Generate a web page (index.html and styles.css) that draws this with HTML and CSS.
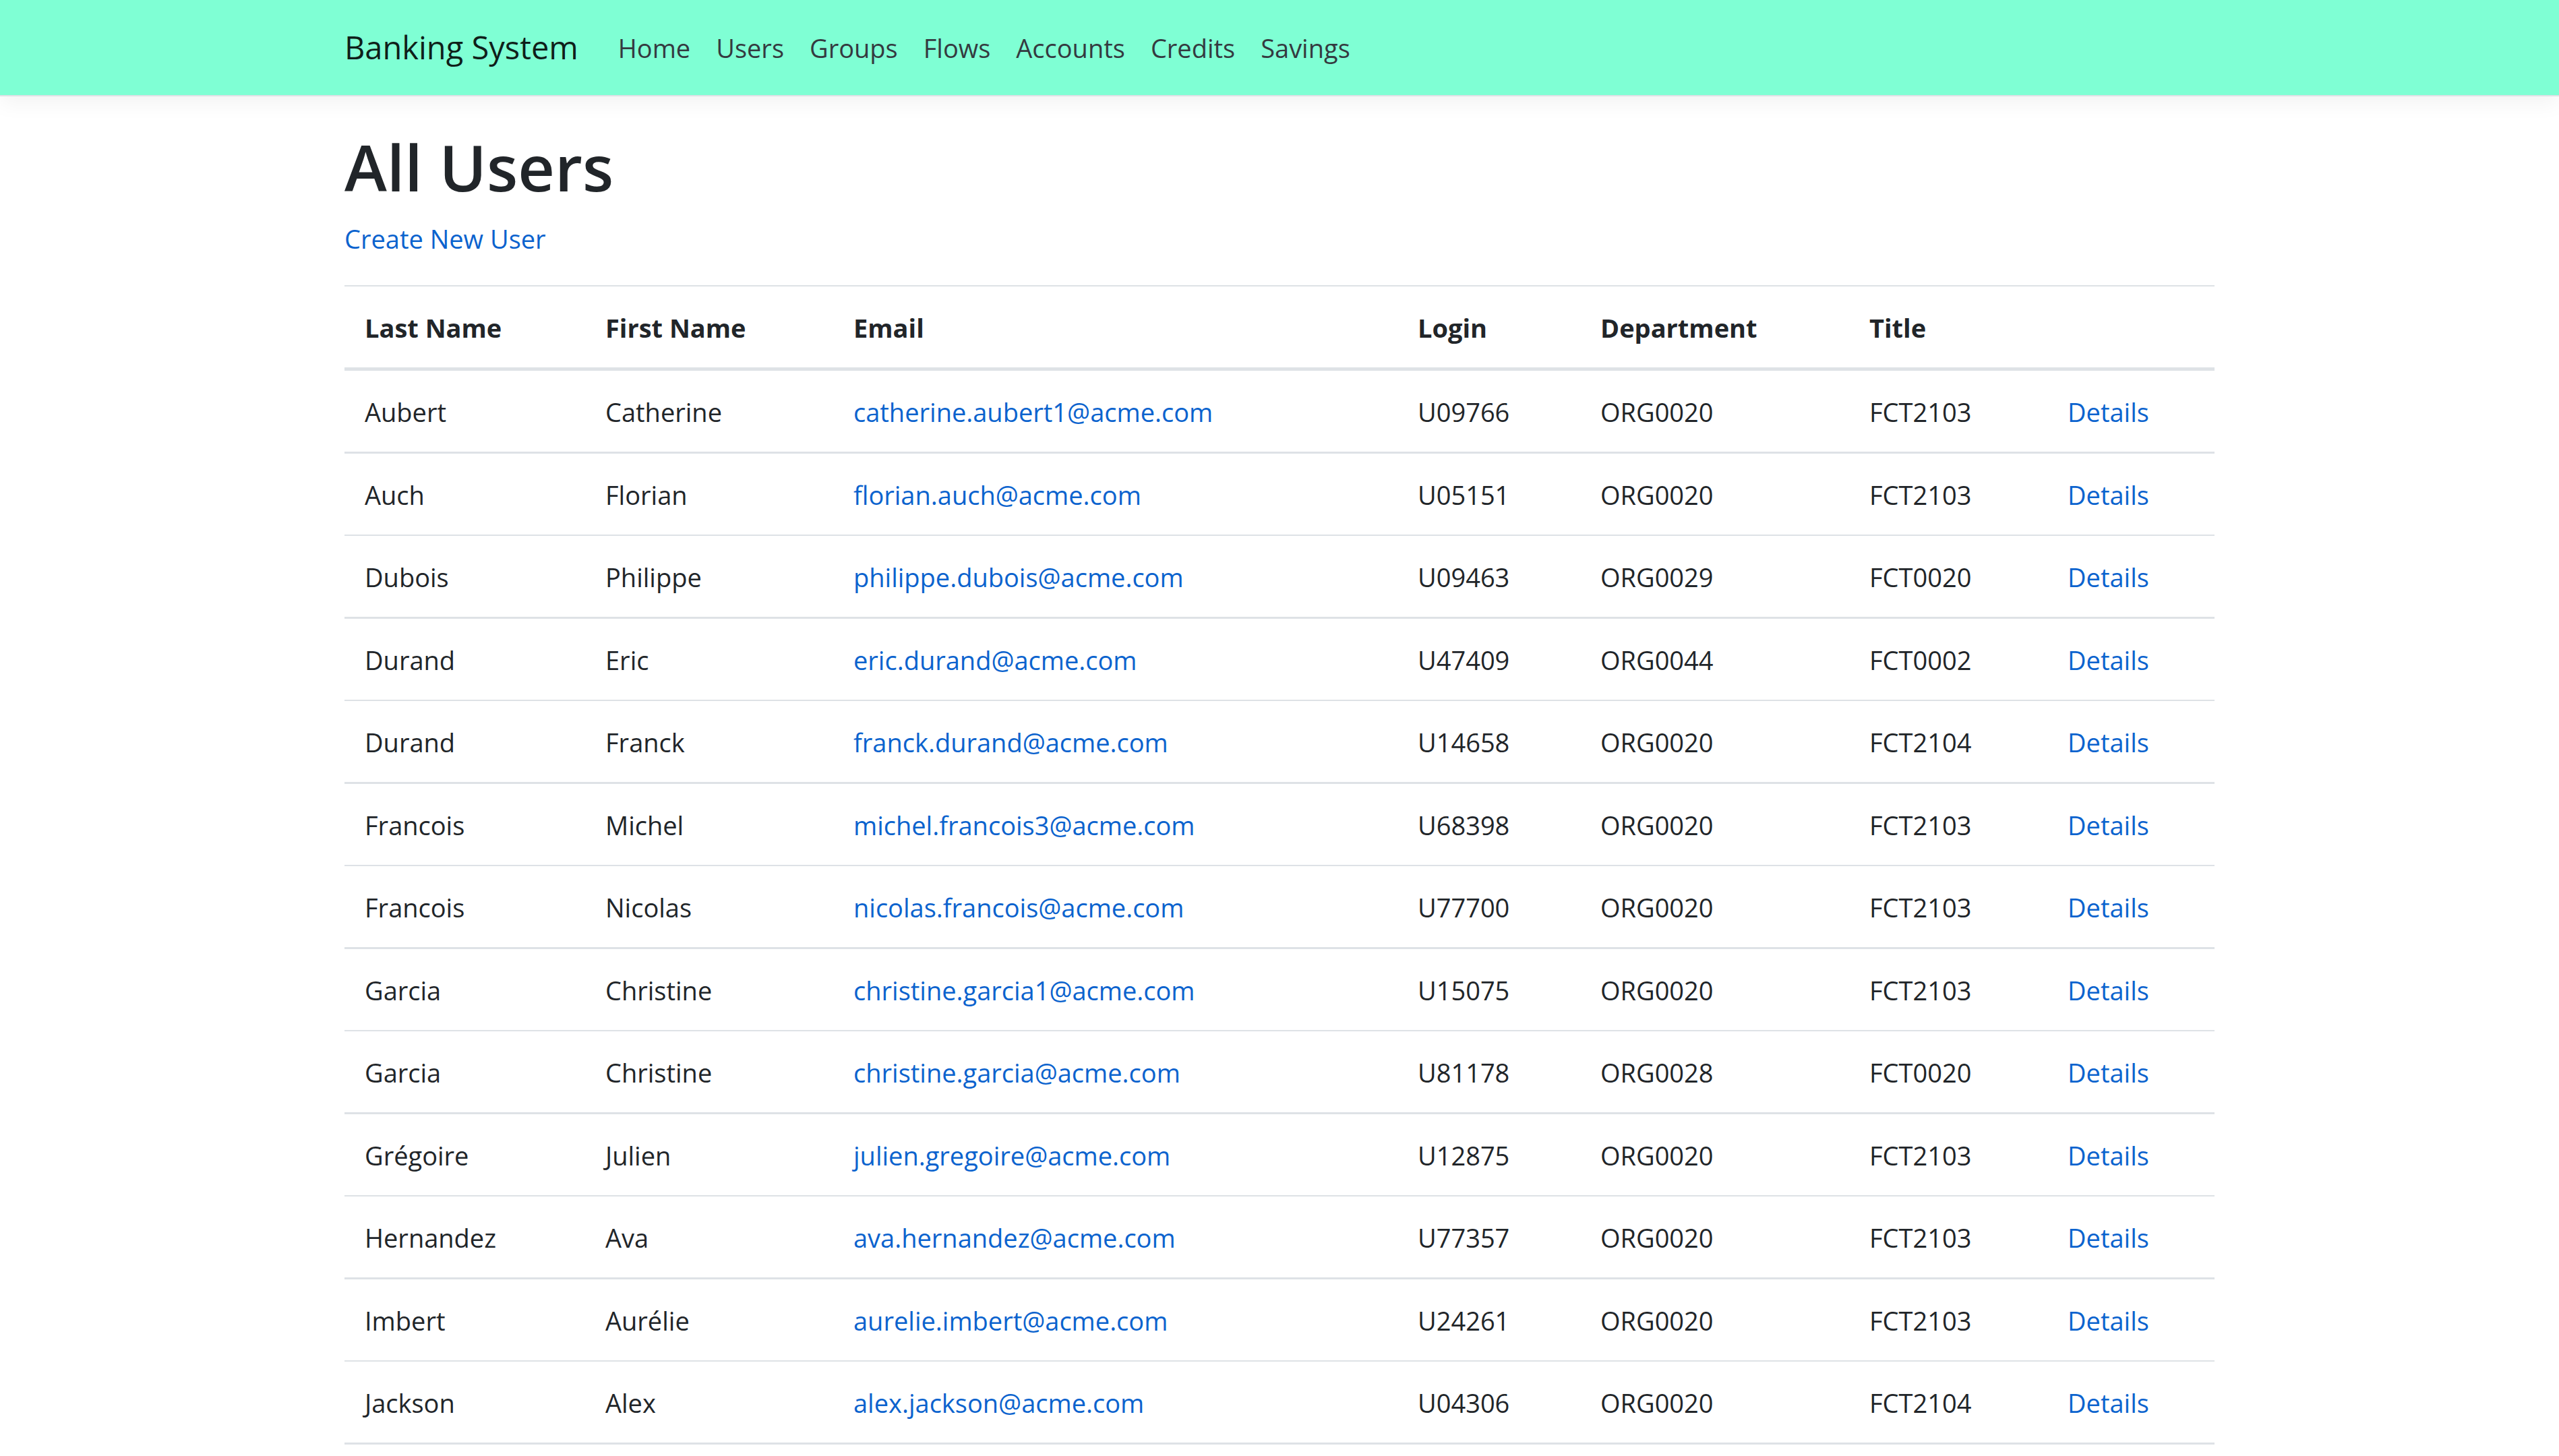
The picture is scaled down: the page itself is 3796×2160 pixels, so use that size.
FILE: index.html
```html
<!DOCTYPE html>
<html lang="en">
<head>
    <meta charset="UTF-8">
    <meta name="viewport" content="width=device-width, initial-scale=1.0">
    <title>All Users - Banking System</title>
    <link rel="stylesheet" href="styles.css">
</head>
<body>
    <header>
        <nav class="navbar">
            <div class="container">
                <a class="navbar-brand" href="/">Banking System</a>
                <ul class="navbar-nav">
                    <li><a class="nav-link" href="/">Home</a></li>
                    <li><a class="nav-link" href="/Users">Users</a></li>
                    <li><a class="nav-link" href="/Groups">Groups</a></li>
                    <li><a class="nav-link" href="/Flows">Flows</a></li>
                    <li><a class="nav-link" href="/Accounts">Accounts</a></li>
                    <li><a class="nav-link" href="/Credits">Credits</a></li>
                    <li><a class="nav-link" href="/Savings">Savings</a></li>
                </ul>
            </div>
        </nav>
    </header>

    <main class="container">
        <h1>All Users</h1>

        <p>
            <a href="/Users/Create">Create New User</a>
        </p>

        <table class="table">
            <colgroup>
                <col class="col-last-name">
                <col class="col-first-name">
                <col class="col-email">
                <col class="col-login">
                <col class="col-department">
                <col class="col-title">
                <col class="col-actions">
            </colgroup>
            <thead>
                <tr>
                    <th>Last Name</th>
                    <th>First Name</th>
                    <th>Email</th>
                    <th>Login</th>
                    <th>Department</th>
                    <th>Title</th>
                    <th></th>
                </tr>
            </thead>
            <tbody>
                <tr>
                    <td>Aubert</td>
                    <td>Catherine</td>
                    <td><a href="mailto:catherine.aubert1@acme.com">catherine.aubert1@acme.com</a></td>
                    <td>U09766</td>
                    <td>ORG0020</td>
                    <td>FCT2103</td>
                    <td><a href="/Users/Details/U09766">Details</a></td>
                </tr>
                <tr>
                    <td>Auch</td>
                    <td>Florian</td>
                    <td><a href="mailto:florian.auch@acme.com">florian.auch@acme.com</a></td>
                    <td>U05151</td>
                    <td>ORG0020</td>
                    <td>FCT2103</td>
                    <td><a href="/Users/Details/U05151">Details</a></td>
                </tr>
                <tr>
                    <td>Dubois</td>
                    <td>Philippe</td>
                    <td><a href="mailto:philippe.dubois@acme.com">philippe.dubois@acme.com</a></td>
                    <td>U09463</td>
                    <td>ORG0029</td>
                    <td>FCT0020</td>
                    <td><a href="/Users/Details/U09463">Details</a></td>
                </tr>
                <tr>
                    <td>Durand</td>
                    <td>Eric</td>
                    <td><a href="mailto:eric.durand@acme.com">eric.durand@acme.com</a></td>
                    <td>U47409</td>
                    <td>ORG0044</td>
                    <td>FCT0002</td>
                    <td><a href="/Users/Details/U47409">Details</a></td>
                </tr>
                <tr>
                    <td>Durand</td>
                    <td>Franck</td>
                    <td><a href="mailto:franck.durand@acme.com">franck.durand@acme.com</a></td>
                    <td>U14658</td>
                    <td>ORG0020</td>
                    <td>FCT2104</td>
                    <td><a href="/Users/Details/U14658">Details</a></td>
                </tr>
                <tr>
                    <td>Francois</td>
                    <td>Michel</td>
                    <td><a href="mailto:michel.francois3@acme.com">michel.francois3@acme.com</a></td>
                    <td>U68398</td>
                    <td>ORG0020</td>
                    <td>FCT2103</td>
                    <td><a href="/Users/Details/U68398">Details</a></td>
                </tr>
                <tr>
                    <td>Francois</td>
                    <td>Nicolas</td>
                    <td><a href="mailto:nicolas.francois@acme.com">nicolas.francois@acme.com</a></td>
                    <td>U77700</td>
                    <td>ORG0020</td>
                    <td>FCT2103</td>
                    <td><a href="/Users/Details/U77700">Details</a></td>
                </tr>
                <tr>
                    <td>Garcia</td>
                    <td>Christine</td>
                    <td><a href="mailto:christine.garcia1@acme.com">christine.garcia1@acme.com</a></td>
                    <td>U15075</td>
                    <td>ORG0020</td>
                    <td>FCT2103</td>
                    <td><a href="/Users/Details/U15075">Details</a></td>
                </tr>
                <tr>
                    <td>Garcia</td>
                    <td>Christine</td>
                    <td><a href="mailto:christine.garcia@acme.com">christine.garcia@acme.com</a></td>
                    <td>U81178</td>
                    <td>ORG0028</td>
                    <td>FCT0020</td>
                    <td><a href="/Users/Details/U81178">Details</a></td>
                </tr>
                <tr>
                    <td>Grégoire</td>
                    <td>Julien</td>
                    <td><a href="mailto:julien.gregoire@acme.com">julien.gregoire@acme.com</a></td>
                    <td>U12875</td>
                    <td>ORG0020</td>
                    <td>FCT2103</td>
                    <td><a href="/Users/Details/U12875">Details</a></td>
                </tr>
                <tr>
                    <td>Hernandez</td>
                    <td>Ava</td>
                    <td><a href="mailto:ava.hernandez@acme.com">ava.hernandez@acme.com</a></td>
                    <td>U77357</td>
                    <td>ORG0020</td>
                    <td>FCT2103</td>
                    <td><a href="/Users/Details/U77357">Details</a></td>
                </tr>
                <tr>
                    <td>Imbert</td>
                    <td>Aurélie</td>
                    <td><a href="mailto:aurelie.imbert@acme.com">aurelie.imbert@acme.com</a></td>
                    <td>U24261</td>
                    <td>ORG0020</td>
                    <td>FCT2103</td>
                    <td><a href="/Users/Details/U24261">Details</a></td>
                </tr>
                <tr>
                    <td>Jackson</td>
                    <td>Alex</td>
                    <td><a href="mailto:alex.jackson@acme.com">alex.jackson@acme.com</a></td>
                    <td>U04306</td>
                    <td>ORG0020</td>
                    <td>FCT2104</td>
                    <td><a href="/Users/Details/U04306">Details</a></td>
                </tr>
            </tbody>
        </table>
    </main>
</body>
</html>
```
FILE: styles.css
```css
* {
    margin: 0;
    padding: 0;
    box-sizing: border-box;
}

body {
    font-family: "Segoe UI", "Open Sans", sans-serif;
    font-size: 38px;
    line-height: 60px;
    color: #212529;
    background: #fff;
}

a {
    color: #0b63ce;
    text-decoration: none;
}

a:hover {
    text-decoration: underline;
}

.container {
    width: 100%;
    max-width: 2850px;
    margin: 0 auto;
    padding: 0 38px;
}

/* Navbar */

.navbar {
    margin-bottom: 44px;
    padding: 20px 0;
    background: #7fffd4;
    border-bottom: 2px solid #dee2e6;
    box-shadow: 0 10px 30px rgba(0, 0, 0, .05);
}

.navbar .container {
    display: flex;
    align-items: center;
}

.navbar-brand {
    margin-right: 40px;
    font-size: 47px;
    line-height: 101px;
    color: rgba(0, 0, 0, .9);
}

.navbar-nav {
    display: flex;
    list-style: none;
}

.nav-link {
    display: block;
    padding: 20px 19px;
    color: #343a40;
}

h1 {
    margin-bottom: 17px;
    font-size: 95px;
    font-weight: 600;
    line-height: 120px;
}

p {
    margin-bottom: 39px;
}

/* Users table */

.table {
    width: 100%;
    table-layout: fixed;
    border-spacing: 0;
    border-top: 2px solid #dee2e6;
}

.table th,
.table td {
    padding: 31px 30px 29px;
    text-align: left;
    border-bottom: 2px solid #dee2e6;
}

.table th {
    font-weight: 700;
    border-bottom-width: 5px;
}

.table tbody tr:nth-child(odd) td {
    border-bottom-width: 3px;
}

.col-last-name {
    width: 357px;
}

.col-first-name {
    width: 368px;
}

.col-email {
    width: 837px;
}

.col-login {
    width: 271px;
}

.col-department {
    width: 399px;
}

.col-title {
    width: 294px;
}

.col-actions {
    width: 248px;
}
```
